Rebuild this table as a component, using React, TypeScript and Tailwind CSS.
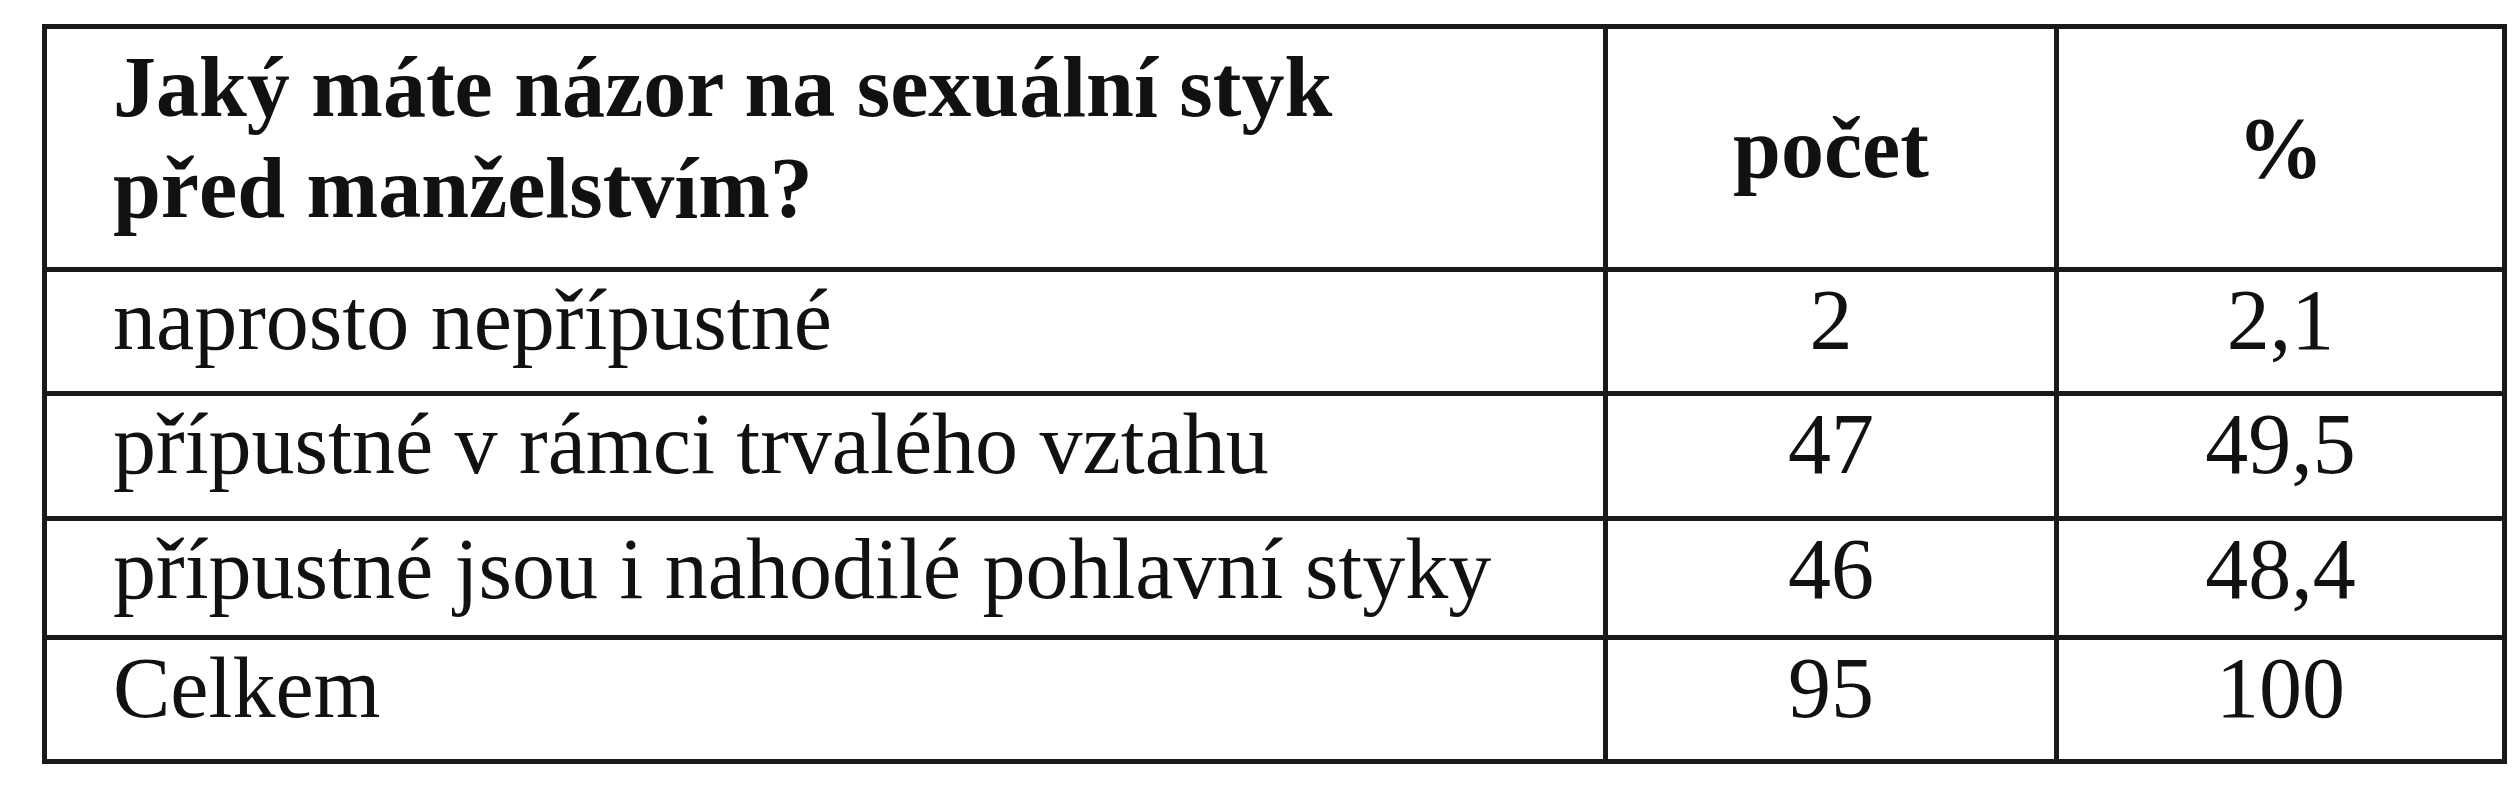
const rows = [
  { label: 'naprosto nepřípustné', count: '2', pct: '2,1', h: 'h-[124px]' },
  { label: 'přípustné v rámci trvalého vztahu', count: '47', pct: '49,5', h: 'h-[125px]' },
  { label: 'přípustné jsou i nahodilé pohlavní styky', count: '46', pct: '48,4', h: 'h-[119px]' },
  { label: 'Celkem', count: '95', pct: '100', h: 'h-[124px]' },
];

export default function App() {
  return (
    <div className="min-h-[800px] w-[2519px] bg-white pl-[42px] pt-[24px] text-[#111]" style={{ fontFamily: '"Liberation Serif", "Times New Roman", serif' }}>
      <table className="w-[2460px] table-fixed border-collapse border-[5px] border-[#1a1a1a] text-[86px]">
        <colgroup>
          <col className="w-[1561px]" />
          <col className="w-[451px]" />
          <col className="w-[448px]" />
        </colgroup>
        <thead>
          <tr className="h-[243px]">
            <th className="border-[5px] border-[#1a1a1a] pl-[66px] pt-[8px] text-left align-top font-bold leading-[101px]">
              Jaký máte názor na sexuální styk
              <br />
              před manželstvím?
            </th>
            <th className="border-[5px] border-[#1a1a1a] text-center align-middle font-bold leading-none">počet</th>
            <th className="border-[5px] border-[#1a1a1a] text-center align-middle font-bold leading-none">%</th>
          </tr>
        </thead>
        <tbody>
          {rows.map((r) => (
            <tr key={r.label} className={r.h}>
              <td className="border-[5px] border-[#1a1a1a] pl-[66px] pt-[5px] align-top leading-none whitespace-nowrap">{r.label}</td>
              <td className="border-[5px] border-[#1a1a1a] pt-[5px] text-center align-top leading-none">{r.count}</td>
              <td className="border-[5px] border-[#1a1a1a] pt-[5px] text-center align-top leading-none">{r.pct}</td>
            </tr>
          ))}
        </tbody>
      </table>
    </div>
  );
}
